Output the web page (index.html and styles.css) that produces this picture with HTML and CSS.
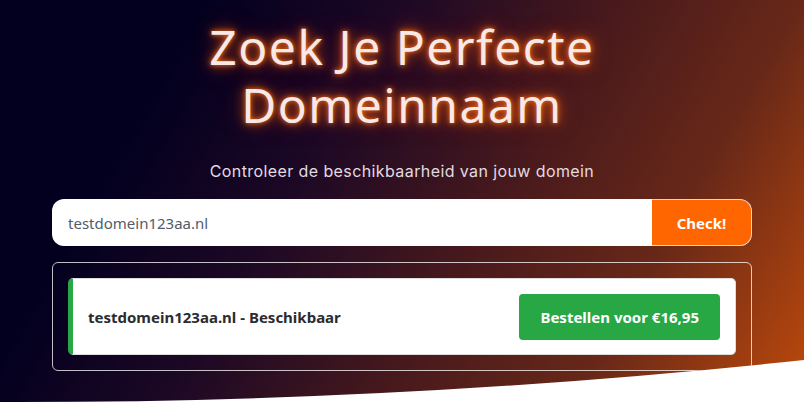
FILE: index.html
```html
<!DOCTYPE html>
<html lang="nl">
<head>
<meta charset="utf-8">
<title>Domeinnaam zoeken</title>
<link rel="stylesheet" href="styles.css">
</head>
<body>
<section class="hero">
  <h1 class="title">Zoek Je Perfecte<br>Domeinnaam</h1>
  <p class="subtitle">Controleer de beschikbaarheid van jouw domein</p>
  <form class="search">
    <input class="search-input" type="text" value="testdomein123aa.nl">
    <button class="search-btn" type="button">Check!</button>
  </form>
  <div class="results">
    <div class="result-card">
      <span class="result-text">testdomein123aa.nl - Beschikbaar</span>
      <button class="order-btn" type="button">Bestellen voor €16,95</button>
    </div>
  </div>
</section>
</body>
</html>
```
FILE: styles.css
```css
html, body {
  margin: 0;
  padding: 0;
  background: #ffffff;
}

.hero {
  height: 420px;
  box-sizing: border-box;
  padding-top: 18px;
  display: flex;
  flex-direction: column;
  align-items: center;
  background: linear-gradient(120deg, #03001f 20%, #1c0825 38%, #4a1a1c 60%, #682818 77%, #c24b0b 100%);
  clip-path: path('M0,0 H804 V360 Q402,403 0,402 Z');
}

.title {
  margin: 0;
  font-family: "Noto Sans", sans-serif;
  font-weight: 400;
  font-size: 48px;
  line-height: 57.6px;
  letter-spacing: 1.5px;
  text-align: center;
  color: #f8e8e8;
  text-shadow: 0 0 5px rgba(255, 120, 30, 0.95), 0 0 12px rgba(255, 95, 0, 0.8), 0 0 22px rgba(255, 80, 0, 0.5);
}

.subtitle {
  margin: 26px 0 0;
  font-family: "Inter", sans-serif;
  font-size: 16px;
  line-height: 24px;
  letter-spacing: 0.4px;
  color: #e2dbe0;
}

.search {
  margin-top: 16px;
  width: 700px;
  display: flex;
  height: 47px;
}

.search-input {
  flex: 1;
  min-width: 0;
  box-sizing: border-box;
  border: none;
  border-radius: 12px 0 0 12px;
  background: #ffffff;
  padding: 0 16px;
  font-family: "Noto Sans", sans-serif;
  font-size: 15px;
  color: #525c69;
  outline: none;
}

.search-btn {
  width: 100px;
  box-sizing: border-box;
  border: 1px solid #f3d6c8;
  border-left: none;
  border-radius: 0 12px 12px 0;
  background: #ff6600;
  color: #ffffff;
  font-family: "Noto Sans", sans-serif;
  font-weight: 700;
  font-size: 15px;
}

.results {
  margin-top: 16px;
  width: 700px;
  box-sizing: border-box;
  border: 1px solid rgba(255, 255, 255, 0.75);
  border-radius: 6px;
  padding: 15px;
}

.result-card {
  display: flex;
  align-items: center;
  justify-content: space-between;
  height: 77px;
  box-sizing: border-box;
  background: #ffffff;
  border: 1px solid #dcdcdc;
  border-left: 5px solid #28a745;
  border-radius: 5px;
  padding: 0 15px 0 15px;
}

.result-text {
  font-family: "Noto Sans", sans-serif;
  font-weight: 700;
  font-size: 15px;
  color: #2a2c30;
}

.order-btn {
  height: 46px;
  padding: 0 21px;
  border: none;
  border-radius: 4px;
  background: #28a745;
  color: #ffffff;
  font-family: "Noto Sans", sans-serif;
  font-weight: 700;
  font-size: 15px;
}
```
